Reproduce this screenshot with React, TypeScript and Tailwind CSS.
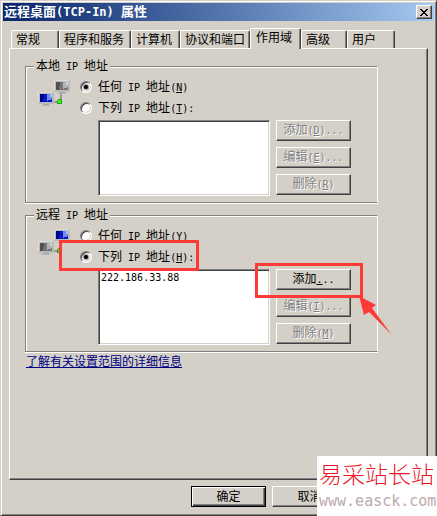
import React from 'react';
import clsx from 'clsx';

const TABS = [
    { label: '常规', width: 'w-12' },
    { label: '程序和服务', width: 'w-[72px]' },
    { label: '计算机', width: 'w-[49px]' },
    { label: '协议和端口', width: 'w-[70px]' },
    { label: '作用域', width: 'w-[51px]' },
    { label: '高级', width: 'w-[46px]' },
    { label: '用户', width: 'w-12' },
];

const ACTIVE_TAB = '作用域';

// Latin text is set a little smaller so it takes half the width of a Chinese character
function Mono({ children }: { children: React.ReactNode }) {
    return <span className="whitespace-pre text-[10px]">{children}</span>;
}

function Mnemonic({ letter, after = '' }: { letter: string; after?: string }) {
    return (
        <Mono>
            (<u>{letter}</u>){after}
        </Mono>
    );
}

interface PushButtonProps {
    children: React.ReactNode;
    disabled?: boolean;
    primary?: boolean;
}

function PushButton({ children, disabled, primary }: PushButtonProps) {
    return (
        <button
            type="button"
            disabled={disabled}
            className={clsx(
                'flex h-[21px] w-[75px] items-center justify-center border bg-[#d4d0c8] whitespace-nowrap',
                primary
                    ? 'border-black shadow-[inset_1px_1px_0_#fff,inset_-1px_-1px_0_#404040,inset_-2px_-2px_0_#808080]'
                    : 'border-t-white border-l-white border-r-[#404040] border-b-[#404040] shadow-[inset_-1px_-1px_0_#808080]',
                disabled && 'text-[#808080] [text-shadow:1px_1px_0_#fff]'
            )}
        >
            <span>{children}</span>
        </button>
    );
}

interface RadioRowProps {
    id: string;
    name: string;
    checked?: boolean;
    letter: string;
    after?: string;
    children: React.ReactNode;
}

function RadioRow({ id, name, checked, letter, after, children }: RadioRowProps) {
    return (
        <div className="flex h-4 items-center gap-[5px]">
            <span className="relative flex h-[13px] w-[13px] shrink-0">
                <input
                    id={id}
                    name={name}
                    type="radio"
                    defaultChecked={checked}
                    className="peer h-3 w-3 appearance-none rounded-full border border-t-[#808080] border-l-[#808080] border-r-white border-b-white bg-white shadow-[inset_1px_1px_0_#404040,inset_-1px_-1px_0_#d4d0c8]"
                />
                <span className="pointer-events-none absolute top-1 left-1 hidden h-1 w-1 rounded-full bg-black ring-1 ring-black/40 peer-checked:block" />
            </span>
            <label htmlFor={id} className="whitespace-nowrap">
                {children}
                <Mono> IP </Mono>地址
                <Mnemonic letter={letter} after={after} />
            </label>
        </div>
    );
}

function Monitor({ x, y, blue }: { x: number; y: number; blue: boolean }) {
    return (
        <g transform={`translate(${x} ${y})`}>
            <path d="M5 11h6v2h-6z" fill="#a2a2a2" />
            <path d="M3 13h9v1h-9z" fill="#b8b8b8" />
            <path d="M0 0h16v12h-16z" fill="#b9bbba" />
            <path d="M0 0h15v1h-14v10h-1z" fill="#dcdcda" />
            <path d="M2 2h12v8h-12z" fill={blue ? '#0a18c8' : '#747474'} />
            <path d="M2 2h4l-1 8h-3z" fill={blue ? '#00008c' : '#505050'} />
            <path d="M9 2h5v5l-5 2z" fill={blue ? '#6c8cf0' : '#b4b4b4'} />
            <path d="M12 2h2v3h-2z" fill={blue ? '#a8c0fa' : '#d4d4d4'} />
        </g>
    );
}

function NetworkIcon({ local }: { local: boolean }) {
    return (
        <svg width="32" height="30" viewBox="0 0 32 30" shapeRendering="crispEdges" className="shrink-0" aria-hidden="true">
            <path d="M15 23h5M23 14v6" stroke="#999" strokeWidth="2" fill="none" />
            <Monitor x={16} y={1} blue={!local} />
            <Monitor x={0} y={13} blue={local} />
            <path d="M19 21l1-1h4v4l-1 1h-4z" fill="#1fa51a" />
            <path d="M20 21h3v3h-3z" fill="#3cf51e" />
        </svg>
    );
}

interface AddressGroupProps {
    id: string;
    title: string;
    icon: React.ReactNode;
    anyOption: React.ReactNode;
    listOption: React.ReactNode;
    addresses: string[];
    actions: React.ReactNode;
}

function AddressGroup({ id, title, icon, anyOption, listOption, addresses, actions }: AddressGroupProps) {
    return (
        <fieldset className="min-w-0 border border-[#808080] border-r-white pr-[26px] pb-[6px] pl-3 shadow-[inset_1px_1px_0_#fff,0_1px_0_#fff]">
            <legend className="-ml-1 bg-[#d4d0c8] px-[2px] leading-4">
                {title}
                <Mono> IP </Mono>地址
            </legend>
            <div className="flex items-start gap-[10px] pt-1">
                {icon}
                <div className="min-w-0 flex-1">
                    <div className="flex flex-col gap-[5px]">
                        {anyOption}
                        {listOption}
                    </div>
                    <div className="mt-1 ml-[18px] flex gap-[6px]">
                        <select
                            id={id}
                            size={4}
                            aria-label={`${title} IP 地址`}
                            className="h-[76px] min-w-0 flex-1 appearance-none overflow-hidden border border-t-[#808080] border-l-[#808080] border-r-white border-b-white bg-white text-[10px] shadow-[inset_1px_1px_0_#404040,inset_-1px_-1px_0_#d4d0c8]"
                        >
                            {addresses.map((a) => (
                                <option key={a} className="px-[2px] pt-[2px]">
                                    {a}
                                </option>
                            ))}
                        </select>
                        <div className="flex flex-col gap-[6px]">{actions}</div>
                    </div>
                </div>
            </div>
        </fieldset>
    );
}

export default function App() {
    return (
        <div className="relative flex min-h-screen flex-col border border-t-[#d4d0c8] border-l-[#d4d0c8] border-r-[#404040] border-b-[#404040] bg-[#d4d0c8] p-[2px] font-['DejaVu_Sans_Mono','Noto_Sans_CJK_SC',monospace] text-[12px] leading-4 text-black shadow-[inset_1px_1px_0_#fff,inset_-1px_-1px_0_#808080]">
            <header className="flex h-[18px] items-center justify-between bg-linear-to-r from-[#0a246a] to-[#a6caf0] pr-[2px] pl-px">
                <h1 className="text-[13px] leading-[18px] font-bold whitespace-nowrap text-white">
                    远程桌面<span className="text-[12px]">(TCP-In) </span>属性
                </h1>
                <button
                    type="button"
                    aria-label="关闭"
                    className="flex h-[14px] w-4 items-center justify-center border border-t-white border-l-white border-r-[#404040] border-b-[#404040] bg-[#d4d0c8] shadow-[inset_-1px_-1px_0_#808080]"
                >
                    <svg width="8" height="7" viewBox="0 0 8 7" shapeRendering="crispEdges" aria-hidden="true">
                        <path d="M0 0h2v1h1v1h2v-1h1v-1h2v1h-1v1h-1v1h-1v1h1v1h1v1h1v1h-2v-1h-1v-1h-2v1h-1v1h-2v-1h1v-1h1v-1h1v-1h-1v-1h-1v-1h-1z" />
                    </svg>
                </button>
            </header>

            <main className="flex flex-1 flex-col px-[6px] pt-[7px]">
                <div role="tablist" className="flex items-end pl-[2px]">
                    {TABS.map((tab) => (
                        <button
                            key={tab.label}
                            type="button"
                            role="tab"
                            aria-selected={tab.label === ACTIVE_TAB}
                            className={clsx(
                                'rounded-t-[2px] border-t border-r border-l border-t-white border-r-[#404040] border-l-white bg-[#d4d0c8] text-left whitespace-nowrap shadow-[inset_-1px_0_0_#808080]',
                                tab.width,
                                tab.label === ACTIVE_TAB ? 'z-10 -mb-px h-[21px] pb-[2px] pl-[5px]' : 'h-[18px] pt-px pl-1'
                            )}
                        >
                            {tab.label}
                        </button>
                    ))}
                </div>

                <section
                    role="tabpanel"
                    className="flex-1 border border-t-white border-l-white border-r-[#404040] border-b-[#404040] pt-[9px] pr-[49px] pb-4 pl-[15px] shadow-[inset_-1px_-1px_0_#808080]"
                >
                    <AddressGroup
                        id="local-list"
                        title="本地"
                        icon={<NetworkIcon local />}
                        anyOption={
                            <RadioRow id="local-any" name="local" letter="N" checked>
                                任何
                            </RadioRow>
                        }
                        listOption={
                            <RadioRow id="local-these" name="local" letter="T" after=":">
                                下列
                            </RadioRow>
                        }
                        addresses={[]}
                        actions={
                            <>
                                <PushButton disabled>
                                    添加
                                    <Mnemonic letter="D" after="..." />
                                </PushButton>
                                <PushButton disabled>
                                    编辑
                                    <Mnemonic letter="E" after="..." />
                                </PushButton>
                                <PushButton disabled>
                                    删除
                                    <Mnemonic letter="R" />
                                </PushButton>
                            </>
                        }
                    />

                    <div className="mt-1">
                        <AddressGroup
                            id="remote-list"
                            title="远程"
                            icon={<NetworkIcon local={false} />}
                            anyOption={
                                <RadioRow id="remote-any" name="remote" letter="Y">
                                    任何
                                </RadioRow>
                            }
                            listOption={
                                <div className="relative">
                                    <RadioRow id="remote-these" name="remote" letter="H" after=":" checked>
                                        下列
                                    </RadioRow>
                                    <span className="pointer-events-none absolute -top-[9px] -left-[21px] z-10 h-[31px] w-[140px] border-3 border-[#fd3a36]" />
                                </div>
                            }
                            addresses={['222.186.33.88']}
                            actions={
                                <>
                                    <div className="relative">
                                        <PushButton>
                                            添加
                                            <Mono>
                                                <u>.</u>..
                                            </Mono>
                                        </PushButton>
                                        <span className="pointer-events-none absolute -top-[6px] -right-3 -bottom-2 -left-[21px] z-10 border-3 border-[#fd3a36]" />
                                        <svg
                                            width="33"
                                            height="38"
                                            viewBox="0 0 33 38"
                                            className="pointer-events-none absolute top-[27px] left-[83px] z-10"
                                            aria-hidden="true"
                                        >
                                            <path d="M0 0L17 9L13 12L32 38L10 16L5 19Z" fill="#fd3a36" />
                                        </svg>
                                    </div>
                                    <PushButton disabled>
                                        编辑
                                        <Mnemonic letter="I" after="..." />
                                    </PushButton>
                                    <PushButton disabled>
                                        删除
                                        <Mnemonic letter="M" />
                                    </PushButton>
                                </>
                            }
                        />
                    </div>

                    <a href="#scope" className="mt-[2px] ml-px inline-block text-[#000080] underline">
                        了解有关设置范围的详细信息
                    </a>
                </section>
            </main>

            <footer className="flex h-[33px] shrink-0 justify-end gap-[6px] pt-[6px] pr-[87px]">
                <PushButton primary>确定</PushButton>
                <PushButton>取消</PushButton>
            </footer>

            <div className="absolute -right-px -bottom-px z-20 flex h-[60px] w-[120px] flex-col bg-white pt-1 pl-[2px]">
                <span className="text-[23px] leading-[30px] font-light whitespace-nowrap text-[#f01428]">易采站长站</span>
                <span className="text-[15px] leading-[22px] text-[#bca8ac]">www.easck.com</span>
            </div>
        </div>
    );
}
